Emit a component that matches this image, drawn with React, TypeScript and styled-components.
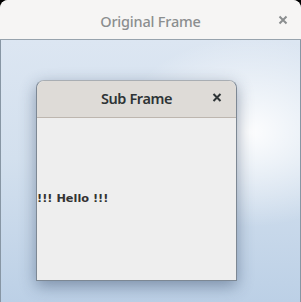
import React from 'react';
import styled, { createGlobalStyle } from 'styled-components';

const GlobalStyle = createGlobalStyle`
  html, body {
    margin: 0;
    padding: 0;
    background: #000000;
  }
  * {
    box-sizing: border-box;
  }
`;

const Window = styled.div`
  width: 301px;
  height: 302px;
  display: flex;
  flex-direction: column;
  border-radius: 8px 8px 0 0;
  overflow: hidden;
  background: #f6f5f4;
`;

const TitleBar = styled.div<{ $sub?: boolean }>`
  position: relative;
  flex: 0 0 auto;
  height: ${p => (p.$sub ? '37px' : '40px')};
  display: flex;
  align-items: center;
  justify-content: center;
  background: ${p => (p.$sub ? '#dedbd7' : '#f6f5f4')};
  border-bottom: 1px solid ${p => (p.$sub ? '#bdb6af' : '#97a3ad')};
  border-radius: 8px 8px 0 0;
`;

const Title = styled.span<{ $sub?: boolean }>`
  font-family: 'Noto Sans', 'Open Sans', sans-serif;
  font-size: 14.5px;
  font-weight: ${p => (p.$sub ? 600 : 500)};
  color: ${p => (p.$sub ? '#2e3436' : '#8b8e8f')};
  letter-spacing: ${p => (p.$sub ? '-0.4px' : '-0.2px')};
  margin-top: ${p => (p.$sub ? '-2px' : '2px')};
`;

const CloseButton = styled.span<{ $sub?: boolean }>`
  position: absolute;
  right: ${p => (p.$sub ? '14px' : '13px')};
  top: 50%;
  transform: translateY(${p => (p.$sub ? '-65%' : '-50%')});
  width: 10px;
  height: 10px;
  display: flex;
  color: ${p => (p.$sub ? '#2e3436' : '#8b8e8f')};
`;

const Desktop = styled.div`
  flex: 1;
  padding: 40px 0 0 35px;
  border-left: 1px solid #8796a4;
  border-right: 1px solid #8796a4;
  background:
    radial-gradient(ellipse 130px 95px at 248px 92px, rgba(255, 255, 255, 0.95), rgba(255, 255, 255, 0) 100%),
    linear-gradient(to bottom, #dce6f2 0%, #d3e0ee 45%, #bcd0e6 100%);
`;

const SubFrame = styled.div`
  width: 201px;
  height: 201px;
  display: flex;
  flex-direction: column;
  border-radius: 8px 8px 0 0;
  border: 1px solid #7d8894;
  border-top-color: #a9aeb3;
  box-shadow: 0 5px 16px rgba(40, 60, 90, 0.45);
  background: #eeeeee;
`;

const SubBody = styled.div`
  flex: 1;
  display: flex;
  align-items: center;
  background: #eeeeee;
  padding-bottom: 1px;
`;

const Hello = styled.span`
  font-family: 'DejaVu Sans', sans-serif;
  font-weight: bold;
  font-size: 11.3px;
  color: #333333;
`;

const CloseIcon = () => (
  <svg width="10" height="10" viewBox="0 0 10 10">
    <path d="M1.5 1.5 L8.5 8.5 M8.5 1.5 L1.5 8.5" stroke="currentColor" strokeWidth="2" />
  </svg>
);

const App = () => (
  <>
    <GlobalStyle />
    <Window>
      <TitleBar>
        <Title>Original Frame</Title>
        <CloseButton>
          <CloseIcon />
        </CloseButton>
      </TitleBar>
      <Desktop>
        <SubFrame>
          <TitleBar $sub>
            <Title $sub>Sub Frame</Title>
            <CloseButton $sub>
              <CloseIcon />
            </CloseButton>
          </TitleBar>
          <SubBody>
            <Hello>!!! Hello !!!</Hello>
          </SubBody>
        </SubFrame>
      </Desktop>
    </Window>
  </>
);

export default App;
